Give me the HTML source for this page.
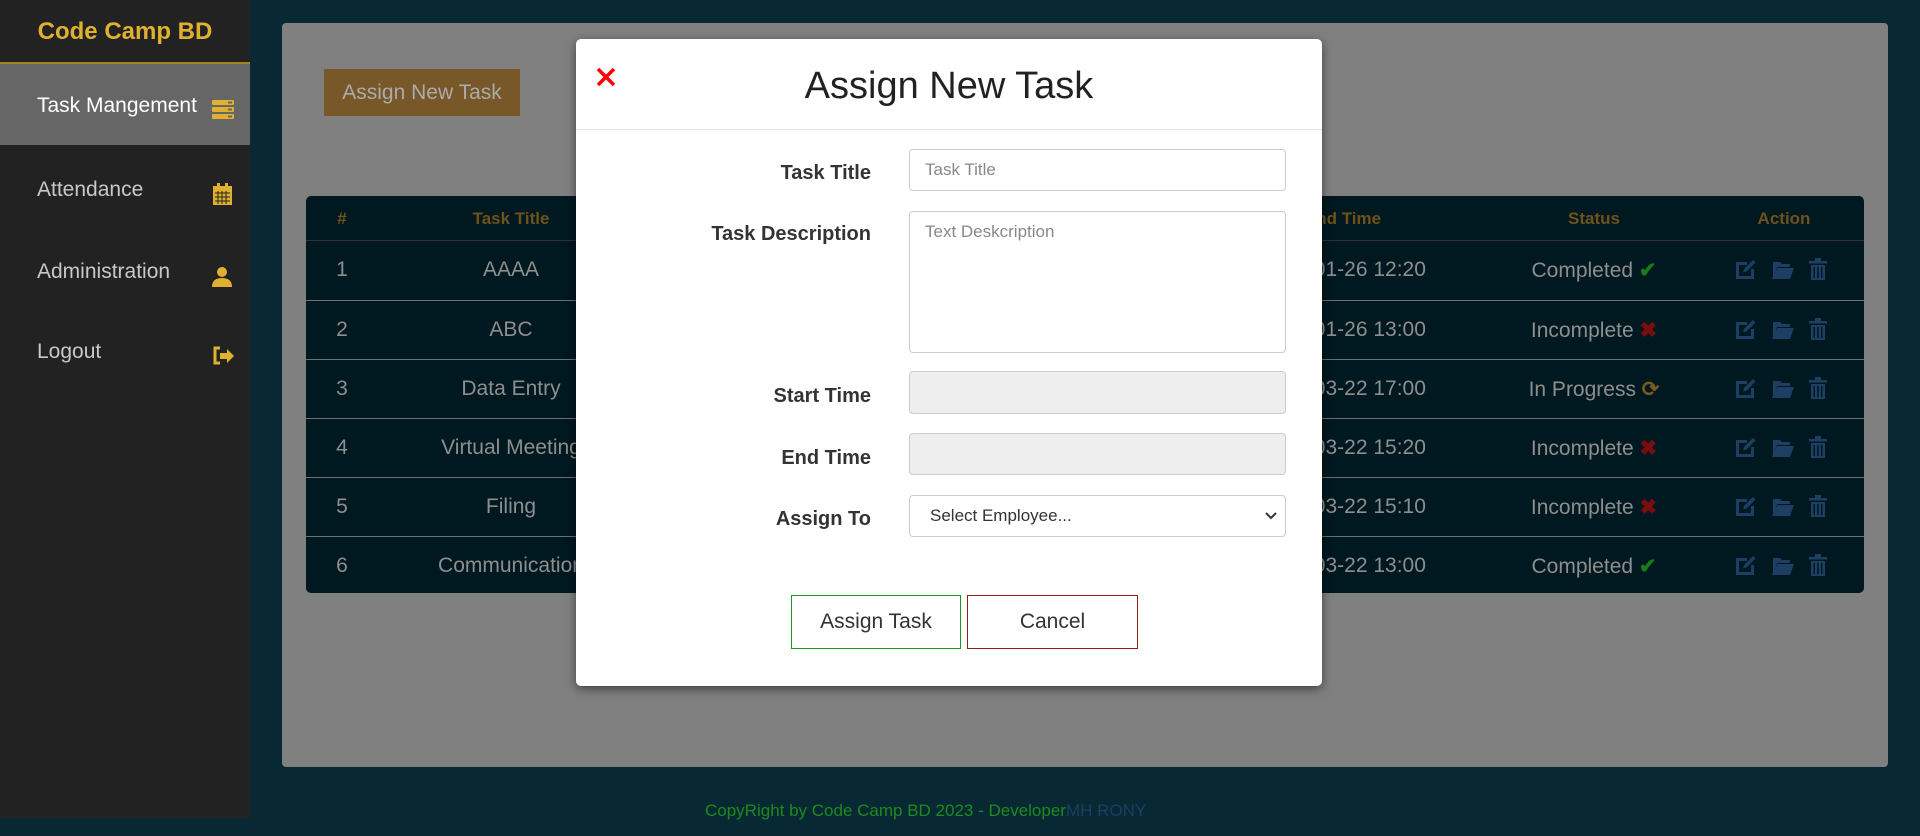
<!DOCTYPE html>
<html><head><meta charset="utf-8"><style>
*{box-sizing:border-box;margin:0;padding:0}
body{width:1920px;height:836px;overflow:hidden;background:#082934;font-family:"Liberation Sans",sans-serif;position:relative}
.side{position:absolute;left:0;top:0;width:250px;height:818px;background:#222}
.brand{height:64px;border-bottom:2px solid #a48524;color:#e0b030;font-weight:bold;font-size:24px;text-align:center;line-height:64px}
.nav{position:absolute;left:0;width:250px;height:81px;color:#c8c8c8;font-size:21px;padding-left:37px;line-height:84px}
.nav.act{background:#666;color:#fff}
.nav svg{position:absolute;left:212px;top:30px}
.card{position:absolute;left:282px;top:23px;width:1606px;height:744px;background:#808080;border-radius:4px}
.btn1{position:absolute;left:324px;top:69px;width:196px;height:47px;background:#785829;color:#ababab;font-size:21px;line-height:47px;text-align:center}
.tbl{position:absolute;left:306px;top:196px;width:1558px;height:397px;background:#001820;border-radius:5px;overflow:hidden}
.row{position:absolute;left:0;width:1558px;height:59px;border-top:1px solid #707070;color:#8e8e8e;font-size:21px}
.row span,.hd span{position:absolute;transform:translateX(-50%);white-space:nowrap}
.hd{position:absolute;left:0;top:0;width:1558px;height:45px;color:#6e521b;font-weight:bold;font-size:17px;line-height:45px;border-bottom:1px solid #333}
.row span{top:17px}
.row .ic{position:absolute;top:16px}
.modal{position:absolute;left:576px;top:39px;width:746px;height:647px;background:#fff;border-radius:5px;box-shadow:0 3px 10px rgba(0,0,0,.5)}
.mh{height:91px;border-bottom:1px solid #e4e4e4;text-align:center;font-size:38px;color:#222;line-height:94px}
.x{position:absolute;left:20px;top:28px}
.lbl{position:absolute;right:451px;font-size:20px;font-weight:bold;color:#333;white-space:nowrap}
.inp{position:absolute;left:333px;width:377px;border:1px solid #ccc;border-radius:4px;font-size:17px;color:#888;padding:10px 15px}
.b{position:absolute;top:556px;height:54px;font-size:21px;color:#333;text-align:center;line-height:52px}
.foot{position:absolute;left:705px;top:801px;font-size:17px;color:#1c8a1c}
</style></head><body>
<div class="side">
<div class="brand">Code Camp BD</div>
<div class="nav act" style="top:64px">Task Mangement<svg width="22" height="20" viewBox="0 0 22 20" style="top:35px"><rect x="0" y="1" width="22" height="5" rx="1" fill="#e0b030"/><rect x="0" y="8" width="22" height="5" rx="1" fill="#e0b030"/><rect x="0" y="15" width="22" height="5" rx="1" fill="#e0b030"/><rect x="16" y="2.5" width="4" height="2" fill="#666"/><rect x="16" y="9.5" width="4" height="2" fill="#666"/><rect x="16" y="16.5" width="4" height="2" fill="#666"/></svg></div>
<div class="nav" style="top:148px">Attendance<svg width="20" height="22" viewBox="0 0 20 22" style="top:35px;left:213px"><rect x="0" y="3" width="19" height="19" fill="#e0b030"/><rect x="4" y="0" width="3" height="5" fill="#e0b030"/><rect x="12" y="0" width="3" height="5" fill="#e0b030"/><path d="M2 10h15M2 14h15M2 18h15M5 8v13M9 8v13M13 8v13" stroke="#222" stroke-width="1"/></svg></div>
<div class="nav" style="top:230px">Administration<svg width="20" height="22" viewBox="0 0 20 22" style="top:36px"><circle cx="10" cy="6" r="5" fill="#e0b030"/><path d="M0 21 Q0 12 10 12 Q20 12 20 21Z" fill="#e0b030"/></svg></div>
<div class="nav" style="top:310px">Logout<svg width="22" height="20" viewBox="0 0 22 20" style="top:36px"><path d="M8 2H3v15h5" stroke="#e0b030" stroke-width="3" fill="none"/><path d="M8 7h7V3l7 7-7 7v-4H8z" fill="#e0b030"/></svg></div>
</div>
<div class="card"></div>
<div class="btn1">Assign New Task</div>
<svg width="0" height="0" style="position:absolute"><defs>
<g id="acts" fill="#1d3f63">
<path d="M1 5h11v3H4v11h12v-7h3v10H1z"/><path d="M9 12l9-9 2.5 2.5-9 9-3.5 1z"/>
<path d="M38 5h7l2 2h8v3H42l-4 11z"/><path d="M42 11h17l-4 11H37z"/>
<path d="M74 4h18v2.5H74z"/><path d="M80 1h6v3h-6z"/><path d="M76 8h14v15H76z M78.5 10v11h1.5V10z M82.2 10v11h1.5V10z M86 10v11h1.5V10z" fill-rule="evenodd"/>
</g></defs></svg>
<div class="tbl">
<div class="hd"><span style="left:36px">#</span><span style="left:205px">Task Title</span><span style="left:1037px">End Time</span><span style="left:1288px">Status</span><span style="left:1478px">Action</span></div>
<div class="row" style="top:45px;border-top:none"><span style="left:36px">1</span><span style="left:205px">AAAA</span><span style="left:1037px">2023-01-26 12:20</span><span style="left:1288px">Completed <b style="color:#1a7a1a">✔</b></span><svg class="ic" style="left:1429px" width="100" height="26"><use href="#acts"/></svg></div>
<div class="row" style="top:104px"><span style="left:36px">2</span><span style="left:205px">ABC</span><span style="left:1037px">2023-01-26 13:00</span><span style="left:1288px">Incomplete <b style="color:#7a0e0e">✖</b></span><svg class="ic" style="left:1429px" width="100" height="26"><use href="#acts"/></svg></div>
<div class="row" style="top:163px"><span style="left:36px">3</span><span style="left:205px">Data Entry</span><span style="left:1037px">2023-03-22 17:00</span><span style="left:1288px">In Progress <b style="color:#7a5c1e">⟳</b></span><svg class="ic" style="left:1429px" width="100" height="26"><use href="#acts"/></svg></div>
<div class="row" style="top:222px"><span style="left:36px">4</span><span style="left:205px">Virtual Meeting</span><span style="left:1037px">2023-03-22 15:20</span><span style="left:1288px">Incomplete <b style="color:#7a0e0e">✖</b></span><svg class="ic" style="left:1429px" width="100" height="26"><use href="#acts"/></svg></div>
<div class="row" style="top:281px"><span style="left:36px">5</span><span style="left:205px">Filing</span><span style="left:1037px">2023-03-22 15:10</span><span style="left:1288px">Incomplete <b style="color:#7a0e0e">✖</b></span><svg class="ic" style="left:1429px" width="100" height="26"><use href="#acts"/></svg></div>
<div class="row" style="top:340px"><span style="left:36px">6</span><span style="left:205px">Communication</span><span style="left:1037px">2023-03-22 13:00</span><span style="left:1288px">Completed <b style="color:#1a7a1a">✔</b></span><svg class="ic" style="left:1429px" width="100" height="26"><use href="#acts"/></svg></div>
</div>
<div class="modal">
<div class="mh">Assign New Task</div>
<svg class="x" width="20" height="20" viewBox="0 0 20 20"><path d="M2 2L18 18M18 2L2 18" stroke="#f00" stroke-width="3.5"/></svg>
<div class="lbl" style="top:123px">Task Title</div>
<div class="inp" style="top:110px;height:42px">Task Title</div>
<div class="lbl" style="top:184px">Task Description</div>
<div class="inp" style="top:172px;height:142px">Text Deskcription</div>
<div class="lbl" style="top:346px">Start Time</div>
<div class="inp" style="top:332px;height:43px;background:#eee"></div>
<div class="lbl" style="top:408px">End Time</div>
<div class="inp" style="top:394px;height:42px;background:#eee"></div>
<div class="lbl" style="top:469px">Assign To</div>
<div class="inp" style="top:456px;height:42px;color:#333;padding-left:20px">Select Employee...<svg style="position:absolute;right:8px;top:16px" width="12" height="8" viewBox="0 0 12 8"><path d="M1 1l5 5 5-5" stroke="#333" stroke-width="2" fill="none"/></svg></div>
<div class="b" style="left:215px;width:170px;border:1px solid #1a9a1a">Assign Task</div>
<div class="b" style="left:391px;width:171px;border:1px solid #9a1a1a">Cancel</div>
</div>
<div class="foot">CopyRight by Code Camp BD 2023 - Developer<span style="color:#1b3f63">MH RONY</span></div>
</body></html>
